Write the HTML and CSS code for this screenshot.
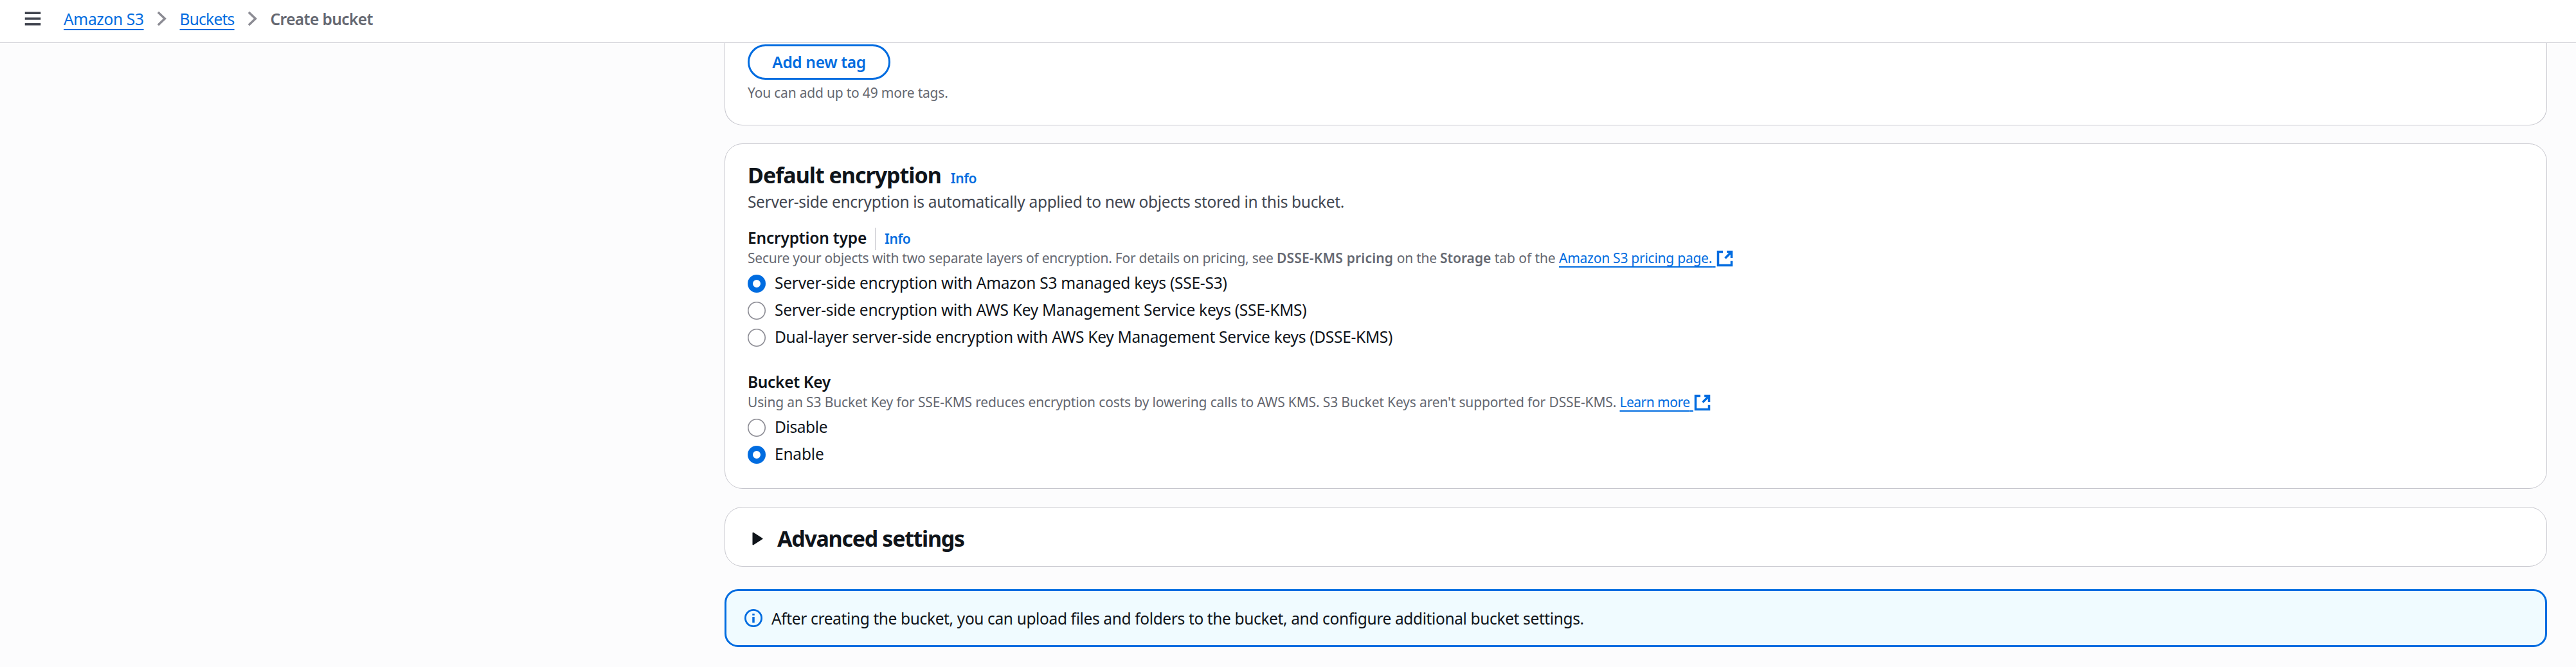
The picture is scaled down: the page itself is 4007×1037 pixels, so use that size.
FILE: index.html
```html
<!DOCTYPE html>
<html lang="en">
<head>
<meta charset="utf-8">
<title>Create bucket</title>
<link rel="stylesheet" href="styles.css">
</head>
<body>
<header class="topbar">
  <svg class="icon menu" viewBox="0 0 16 16"><path d="M1 3h14M1 8h14M1 13h14"/></svg>
  <nav class="breadcrumbs">
    <a class="link crumb-service" href="#">Amazon S3</a>
    <svg class="icon chevron" viewBox="0 0 16 16"><path d="m4.5 2.3 6 5.7-6 5.7"/></svg>
    <a class="link crumb-list" href="#">Buckets</a>
    <svg class="icon chevron" viewBox="0 0 16 16"><path d="m4.5 2.3 6 5.7-6 5.7"/></svg>
    <span class="crumb-current">Create bucket</span>
  </nav>
</header>
<main class="content">
  <section class="card tags">
    <button class="button" type="button">Add new tag</button>
    <p class="hint tags-hint">You can add up to 49 more tags.</p>
  </section>

  <section class="card encryption">
    <div class="card-head"><h2 class="title">Default encryption</h2><a class="info" href="#">Info</a></div>
    <p class="description">Server-side encryption is automatically applied to new objects stored in this bucket.</p>

    <div class="field">
      <div class="label-row"><span class="label">Encryption type</span><a class="info divided" href="#">Info</a></div>
      <p class="hint"><span class="pricing-lead">Secure your objects with two separate layers of encryption. For details on pricing, see </span><b class="pricing-name">DSSE-KMS pricing </b><span class="pricing-on">on the </span><b>Storage </b><span class="pricing-tab">tab of the </span><a class="link pricing-link" href="#">Amazon S3 pricing page.<span class="link-gap"> </span></a><svg class="icon external" viewBox="0 0 16 16"><path d="M6.3 2H2v12h12v-3.9M9.8 2H14v5.4M8.3 7.7 14 2"/></svg></p>
      <div class="radios">
        <label class="radio"><svg class="dot on" viewBox="0 0 28 28"><circle cx="14" cy="14" r="10"/></svg><span class="opt-s3">Server-side encryption with Amazon S3 managed keys (SSE-S3)</span></label>
        <label class="radio"><svg class="dot" viewBox="0 0 28 28"><circle cx="14" cy="14" r="13.2"/></svg><span class="opt-kms">Server-side encryption with AWS Key Management Service keys (SSE-KMS)</span></label>
        <label class="radio"><svg class="dot" viewBox="0 0 28 28"><circle cx="14" cy="14" r="13.2"/></svg><span class="opt-dsse">Dual-layer server-side encryption with AWS Key Management Service keys (DSSE-KMS)</span></label>
      </div>
    </div>

    <div class="field bucket-key">
      <div class="label-row"><span class="label key-label">Bucket Key</span></div>
      <p class="hint"><span class="key-hint">Using an S3 Bucket Key for SSE-KMS reduces encryption costs by lowering calls to AWS KMS. S3 Bucket Keys aren't supported for DSSE-KMS. </span><a class="link learn-link" href="#">Learn more<span class="link-gap"> </span></a><svg class="icon external" viewBox="0 0 16 16"><path d="M6.3 2H2v12h12v-3.9M9.8 2H14v5.4M8.3 7.7 14 2"/></svg></p>
      <div class="radios">
        <label class="radio"><svg class="dot" viewBox="0 0 28 28"><circle cx="14" cy="14" r="13.2"/></svg><span class="opt-off">Disable</span></label>
        <label class="radio"><svg class="dot on" viewBox="0 0 28 28"><circle cx="14" cy="14" r="10"/></svg><span class="opt-on">Enable</span></label>
      </div>
    </div>
  </section>

  <section class="card advanced">
    <svg class="caret" viewBox="0 0 17 21"><path d="M1.5 1.5v18l14-9z"/></svg>
    <h2 class="title">Advanced settings</h2>
  </section>

  <div class="alert">
    <svg class="icon" viewBox="0 0 28 28"><circle cx="14" cy="14" r="12.6"/><path d="M14 7v2.8M14 12v9"/></svg>
    <span>After creating the bucket, you can upload files and folders to the bucket, and configure additional bucket settings.</span>
  </div>
</main>
</body>
</html>
```
FILE: styles.css
```css
* { box-sizing: border-box; }
body {
  margin: 0;
  background: #fcfcfd;
  color: #0f141a;
  font: 400 24.5px/35px "Noto Sans", "Open Sans", sans-serif;
  overflow: hidden;
}
h2, p { margin: 0; }
a { color: #006ce0; }

.icon { width: 28px; height: 28px; flex: none; fill: none; stroke: #006ce0; stroke-width: 2; }
.link {
  text-decoration: underline 2px;
  text-underline-offset: 6px;
  text-decoration-skip-ink: none;
}

/* Top bar */
.topbar {
  display: flex;
  align-items: center;
  height: 67px;
  padding: 0 0 8px 37px;
  background: #fff;
  border-bottom: 1px solid #c6c6cd;
}
.menu { stroke: #424650; }
.chevron { stroke: #8c8c94; margin: 0 14px; }
.breadcrumbs { display: flex; align-items: center; margin-left: 34px; }
.crumb-service { letter-spacing: -.34px; }
.crumb-list { letter-spacing: -.76px; }
.crumb-current { color: #656871; font-weight: 600; letter-spacing: -.6px; }

/* Cards */
.content { width: 2835px; margin-left: 1127px; }
.card {
  padding: 26px 35px 0;
  background: #fff;
  border: 1px solid #c6c6cd;
  border-radius: 28px;
}
.card + .card { margin-top: 28px; }
.tags { height: 128px; padding-top: 2px; border-top: 0; border-radius: 0 0 28px 28px; }
.button {
  display: block;
  width: 222px;
  height: 55px;
  padding: 0;
  background: #fff;
  border: 3px solid #006ce0;
  border-radius: 35px;
  color: #006ce0;
  font: inherit;
  font-weight: 600;
  letter-spacing: -.35px;
}
.hint { color: #656871; font-size: 21px; line-height: 28px; height: 28px; white-space: nowrap; }
.hint b { font-weight: 600; }
.hint .link { text-underline-offset: 5px; }
.tags-hint { margin-top: 6px; letter-spacing: -.2px; }

.encryption { height: 537px; }
.card-head { display: flex; align-items: baseline; gap: 15px; height: 42px; }
.title { font-size: 34px; line-height: 44px; font-weight: 700; letter-spacing: -1px; }
.info { font-size: 21px; line-height: 28px; font-weight: 600; letter-spacing: -.4px; text-decoration: none; }
.description { margin-top: 4px; color: #424650; letter-spacing: -.33px; }

.field { margin-top: 21px; }
.bucket-key { margin-top: 33px; }
.label-row { display: flex; align-items: baseline; height: 35px; }
.label { font-weight: 600; letter-spacing: -.2px; }
.key-label { letter-spacing: -.33px; }
.divided { margin-left: 13px; padding-left: 14px; border-left: 1px solid #c6c6cd; line-height: 35px; }

.pricing-lead { letter-spacing: -.247px; }
.pricing-name { letter-spacing: .19px; }
.pricing-on { letter-spacing: -.28px; }
.pricing-tab { letter-spacing: -.07px; }
.pricing-link { letter-spacing: -.25px; }
.key-hint { letter-spacing: -.147px; }
.learn-link { letter-spacing: -.52px; }
.link-gap { letter-spacing: 0; }
.external { vertical-align: -7px; }

.radios { display: grid; gap: 6px; margin-top: 8px; }
.radio { display: flex; align-items: center; gap: 14px; height: 36px; }
.radio span { height: 36px; line-height: 34px; }
.dot { width: 28px; height: 28px; fill: #fff; stroke: #8c8c94; stroke-width: 1.6; }
.dot.on { stroke: #006ce0; stroke-width: 8; }
.opt-s3 { letter-spacing: -.25px; }
.opt-kms { letter-spacing: -.26px; }
.opt-dsse { letter-spacing: -.3px; }
.opt-off { letter-spacing: -.4px; }
.opt-on { letter-spacing: -.2px; }

.advanced { display: flex; height: 93px; padding-left: 42px; }
.advanced .title { margin-left: 22px; letter-spacing: -1.3px; }
.caret { width: 17px; height: 21px; margin-top: 12px; fill: #0f141a; stroke: #0f141a; stroke-width: 2; stroke-linejoin: round; }

.alert {
  display: flex;
  align-items: center;
  gap: 14px;
  height: 90px;
  margin-top: 35px;
  padding-left: 28px;
  background: #f0fbff;
  border: 3px solid #006ce0;
  border-radius: 21px;
  letter-spacing: -.37px;
}
.alert .icon { stroke-width: 2.8; }
.alert path { stroke-width: 3.5; }
```
